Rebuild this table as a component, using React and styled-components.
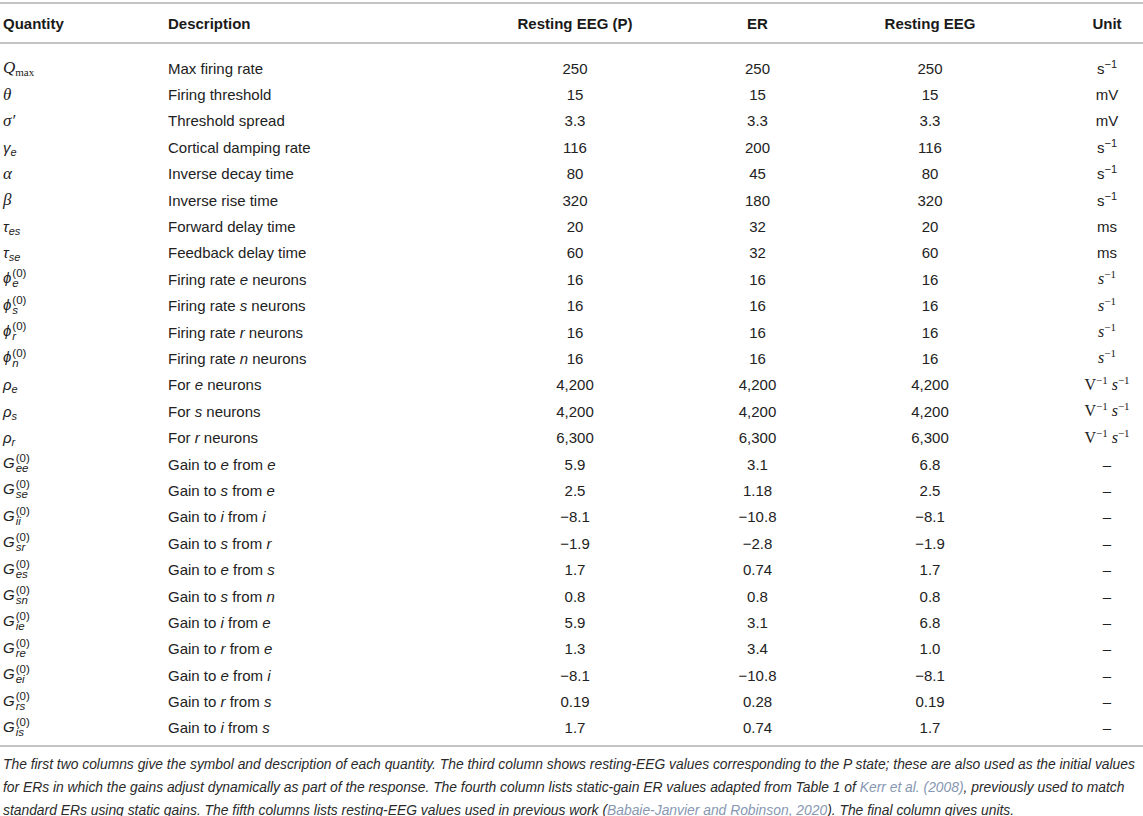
import React from "react";
import styled, { createGlobalStyle } from "styled-components";

const Global = createGlobalStyle`
  html, body { margin: 0; padding: 0; background: #fff; }
  body { font-family: "Liberation Sans", Arial, sans-serif; color: #222; }
`;

const Page = styled.div`
  width: 1143px;
  padding-top: 2px;
`;

const COLS = "168px 292px 230px 135px 210px 108px";

const HeadRow = styled.div`
  display: grid;
  grid-template-columns: ${COLS};
  height: 38px;
  align-items: center;
  border-top: 2px solid #c4c4c4;
  border-bottom: 2px solid #c4c4c4;
  font-weight: bold;
  font-size: 15px;
  color: #1a1a1a;
`;

const Body = styled.div`
  padding: 11px 0 4px;
  border-bottom: 2px solid #c4c4c4;
`;

const Row = styled.div`
  display: grid;
  grid-template-columns: ${COLS};
  height: 26.4px;
  align-items: center;
  font-size: 15px;
  color: #222;
`;

const Cell = styled.div`
  text-align: ${(p) => p.$align || "left"};
  padding-left: ${(p) => p.$pl || 0}px;
  white-space: nowrap;
`;

const SerifIt = styled.span`
  font-family: "Liberation Serif", "Times New Roman", serif;
  font-style: italic;
  font-size: 17px;
`;

const SansIt = styled.span`
  font-style: italic;
`;

const Serif = styled.span`
  font-family: "Liberation Serif", "Times New Roman", serif;
  font-size: 16px;
`;

const Sub = styled.sub`
  font-size: 11px;
  font-style: ${(p) => (p.$up ? "normal" : "italic")};
  font-family: ${(p) => (p.$serif ? '"Liberation Serif", serif' : "inherit")};
  vertical-align: -3px;
  line-height: 0;
`;

const Sup = styled.sup`
  font-size: 11px;
  vertical-align: 6px;
  line-height: 0;
`;

const Stack = styled.span`
  display: inline-flex;
  flex-direction: column;
  vertical-align: middle;
  font-size: 11.5px;
  line-height: 10px;
  margin-left: 1px;
  position: relative;
  top: -1px;
`;

const StackSup = styled.span`
  font-style: normal;
`;

const StackSub = styled.span`
  font-style: italic;
`;

const Footnote = styled.p`
  margin: 0;
  padding: 6px 0 0 3px;
  font-style: italic;
  font-size: 13.85px;
  line-height: 23px;
  color: #2a2a2a;
  white-space: nowrap;
`;

const Ref = styled.span`
  color: #8797b2;
`;

const SymPS = ({ base, sub }) => (
  <span>
    <SansIt>{base}</SansIt>
    <Stack>
      <StackSup>(0)</StackSup>
      <StackSub>{sub}</StackSub>
    </Stack>
  </span>
);

const SansUnit = () => (
  <span>
    s<Sup>−1</Sup>
  </span>
);
const SerifUnit = () => (
  <Serif>
    <i>s</i>
    <Sup>−1</Sup>
  </Serif>
);
const VUnit = () => (
  <Serif>
    V<Sup>−1</Sup> <i>s</i>
    <Sup>−1</Sup>
  </Serif>
);

const rows = [
  [<span><SerifIt>Q</SerifIt><Sub $up $serif>max</Sub></span>, "Max firing rate", "250", "250", "250", <SansUnit />],
  [<SerifIt>θ</SerifIt>, "Firing threshold", "15", "15", "15", "mV"],
  [<SerifIt>σ′</SerifIt>, "Threshold spread", "3.3", "3.3", "3.3", "mV"],
  [<span><SansIt>γ</SansIt><Sub>e</Sub></span>, "Cortical damping rate", "116", "200", "116", <SansUnit />],
  [<SerifIt>α</SerifIt>, "Inverse decay time", "80", "45", "80", <SansUnit />],
  [<SerifIt>β</SerifIt>, "Inverse rise time", "320", "180", "320", <SansUnit />],
  [<span><SansIt>τ</SansIt><Sub>es</Sub></span>, "Forward delay time", "20", "32", "20", "ms"],
  [<span><SansIt>τ</SansIt><Sub>se</Sub></span>, "Feedback delay time", "60", "32", "60", "ms"],
  [<SymPS base="ϕ" sub="e" />, <>Firing rate <i>e</i> neurons</>, "16", "16", "16", <SerifUnit />],
  [<SymPS base="ϕ" sub="s" />, <>Firing rate <i>s</i> neurons</>, "16", "16", "16", <SerifUnit />],
  [<SymPS base="ϕ" sub="r" />, <>Firing rate <i>r</i> neurons</>, "16", "16", "16", <SerifUnit />],
  [<SymPS base="ϕ" sub="n" />, <>Firing rate <i>n</i> neurons</>, "16", "16", "16", <SerifUnit />],
  [<span><SansIt>ρ</SansIt><Sub>e</Sub></span>, <>For <i>e</i> neurons</>, "4,200", "4,200", "4,200", <VUnit />],
  [<span><SansIt>ρ</SansIt><Sub>s</Sub></span>, <>For <i>s</i> neurons</>, "4,200", "4,200", "4,200", <VUnit />],
  [<span><SansIt>ρ</SansIt><Sub>r</Sub></span>, <>For <i>r</i> neurons</>, "6,300", "6,300", "6,300", <VUnit />],
  [<SymPS base="G" sub="ee" />, <>Gain to <i>e</i> from <i>e</i></>, "5.9", "3.1", "6.8", "–"],
  [<SymPS base="G" sub="se" />, <>Gain to <i>s</i> from <i>e</i></>, "2.5", "1.18", "2.5", "–"],
  [<SymPS base="G" sub="ii" />, <>Gain to <i>i</i> from <i>i</i></>, "−8.1", "−10.8", "−8.1", "–"],
  [<SymPS base="G" sub="sr" />, <>Gain to <i>s</i> from <i>r</i></>, "−1.9", "−2.8", "−1.9", "–"],
  [<SymPS base="G" sub="es" />, <>Gain to <i>e</i> from <i>s</i></>, "1.7", "0.74", "1.7", "–"],
  [<SymPS base="G" sub="sn" />, <>Gain to <i>s</i> from <i>n</i></>, "0.8", "0.8", "0.8", "–"],
  [<SymPS base="G" sub="ie" />, <>Gain to <i>i</i> from <i>e</i></>, "5.9", "3.1", "6.8", "–"],
  [<SymPS base="G" sub="re" />, <>Gain to <i>r</i> from <i>e</i></>, "1.3", "3.4", "1.0", "–"],
  [<SymPS base="G" sub="ei" />, <>Gain to <i>e</i> from <i>i</i></>, "−8.1", "−10.8", "−8.1", "–"],
  [<SymPS base="G" sub="rs" />, <>Gain to <i>r</i> from <i>s</i></>, "0.19", "0.28", "0.19", "–"],
  [<SymPS base="G" sub="is" />, <>Gain to <i>i</i> from <i>s</i></>, "1.7", "0.74", "1.7", "–"],
];

export default function App() {
  return (
    <Page>
      <Global />
      <HeadRow>
        <Cell $pl={3}>Quantity</Cell>
        <Cell>Description</Cell>
        <Cell $align="center">Resting EEG (P)</Cell>
        <Cell $align="center">ER</Cell>
        <Cell $align="center">Resting EEG</Cell>
        <Cell $align="center" $pl={36}>Unit</Cell>
      </HeadRow>
      <Body>
        {rows.map((r, i) => (
          <Row key={i}>
            <Cell $pl={3}>{r[0]}</Cell>
            <Cell>{r[1]}</Cell>
            <Cell $align="center">{r[2]}</Cell>
            <Cell $align="center">{r[3]}</Cell>
            <Cell $align="center">{r[4]}</Cell>
            <Cell $align="center" $pl={36}>{r[5]}</Cell>
          </Row>
        ))}
      </Body>
      <Footnote>
        The first two columns give the symbol and description of each quantity. The third column shows
        resting-EEG values corresponding to the P state; these are also used as the initial values
        <br />
        for ERs in which the gains adjust dynamically as part of the response. The fourth column lists static-gain
        ER values adapted from Table 1 of <Ref>Kerr et al. (2008)</Ref>, previously used to match
        <br />
        standard ERs using static gains. The fifth columns lists resting-EEG values used in previous work (
        <Ref>Babaie-Janvier and Robinson, 2020</Ref>). The final column gives units.
      </Footnote>
    </Page>
  );
}
